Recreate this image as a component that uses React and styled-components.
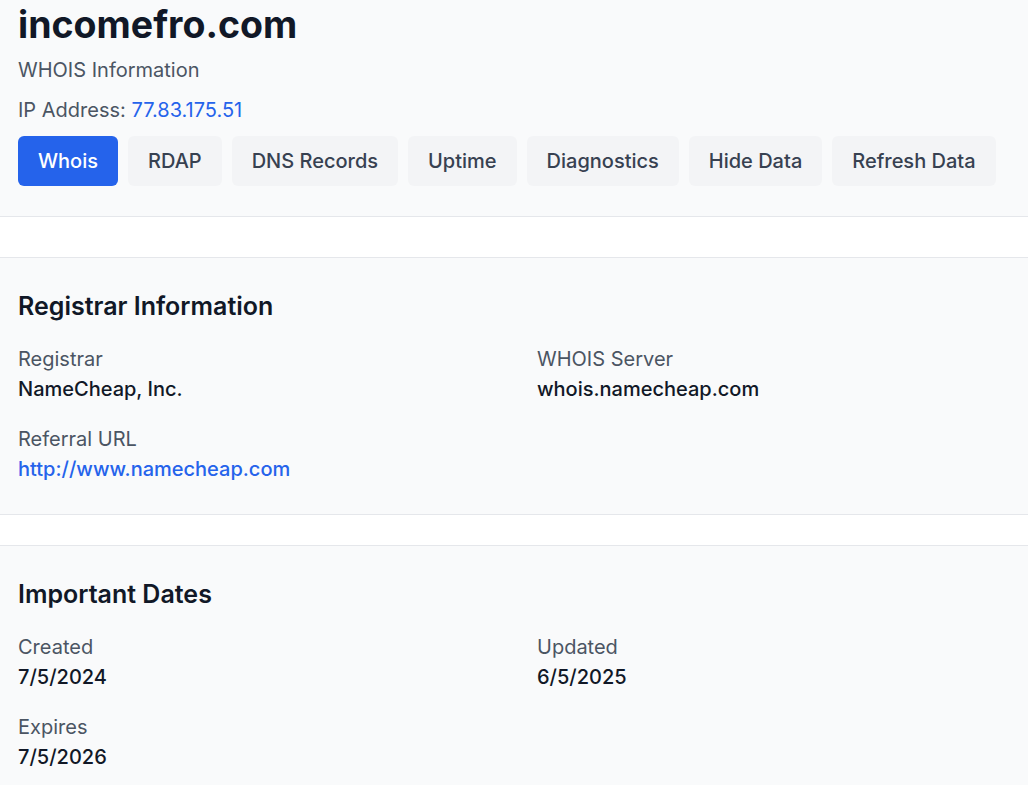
import styled, { createGlobalStyle } from "styled-components";

const GlobalStyle = createGlobalStyle`
  html, body {
    margin: 0;
    padding: 0;
    background: #ffffff;
    font-family: Inter, "Noto Sans", sans-serif;
    color: #111827;
  }
  * { box-sizing: border-box; }
`;

const tabs = ["Whois", "RDAP", "DNS Records", "Uptime", "Diagnostics", "Hide Data", "Refresh Data"];

export default function App() {
  return (
    <>
      <GlobalStyle />
      <Page>
        <Header>
          <Domain>incomefro.com</Domain>
          <Subtitle>WHOIS Information</Subtitle>
          <Subtitle>
            IP Address: <Link href="#">77.83.175.51</Link>
          </Subtitle>
          <TabBar>
            {tabs.map((t, i) => (
              <Tab key={t} $active={i === 0}>{t}</Tab>
            ))}
          </TabBar>
        </Header>

        <Section $gap={40}>
          <SectionTitle>Registrar Information</SectionTitle>
          <Grid>
            <Field>
              <Label>Registrar</Label>
              <Value>NameCheap, Inc.</Value>
            </Field>
            <Field>
              <Label>WHOIS Server</Label>
              <Value>whois.namecheap.com</Value>
            </Field>
            <Field>
              <Label>Referral URL</Label>
              <Value>
                <Link href="#">http://www.namecheap.com</Link>
              </Value>
            </Field>
          </Grid>
        </Section>

        <Section $gap={30}>
          <SectionTitle>Important Dates</SectionTitle>
          <Grid>
            <Field>
              <Label>Created</Label>
              <Value>7/5/2024</Value>
            </Field>
            <Field>
              <Label>Updated</Label>
              <Value>6/5/2025</Value>
            </Field>
            <Field>
              <Label>Expires</Label>
              <Value>7/5/2026</Value>
            </Field>
          </Grid>
        </Section>
      </Page>
    </>
  );
}

const Page = styled.div`
  display: flex;
  flex-direction: column;
  width: 100%;
`;

const Header = styled.header`
  display: flex;
  flex-direction: column;
  gap: 10px;
  padding: 5px 18px 30px;
  background: #f9fafb;
  border-bottom: 1px solid #e5e7eb;
`;

const Domain = styled.h1`
  margin: 0;
  font-size: 37.5px;
  line-height: 40px;
  font-weight: 700;
  color: #111827;
`;

const Subtitle = styled.div`
  font-size: 20px;
  line-height: 30px;
  color: #4b5563;
`;

const Link = styled.a`
  color: #2563eb;
  text-decoration: none;
`;

const TabBar = styled.nav`
  display: flex;
  gap: 10px;
  flex-wrap: wrap;
  margin-top: 1px;
`;

const Tab = styled.button`
  height: 50px;
  padding: 0 20px;
  border: none;
  border-radius: 6px;
  font-family: inherit;
  font-size: 20px;
  font-weight: 500;
  background: ${(p) => (p.$active ? "#2563eb" : "#f3f4f6")};
  color: ${(p) => (p.$active ? "#ffffff" : "#374151")};
  cursor: pointer;
`;

const Section = styled.section`
  margin-top: ${(p) => p.$gap}px;
  padding: 30px 18px;
  background: #f9fafb;
  border-top: 1px solid #e5e7eb;
  border-bottom: 1px solid #e5e7eb;
`;

const SectionTitle = styled.h2`
  margin: 0 0 20px;
  font-size: 25px;
  line-height: 36px;
  font-weight: 600;
  color: #111827;
`;

const Grid = styled.div`
  display: grid;
  grid-template-columns: 1fr 1fr;
  column-gap: 46px;
  row-gap: 20px;
`;

const Field = styled.div`
  display: flex;
  flex-direction: column;
`;

const Label = styled.div`
  font-size: 20px;
  line-height: 30px;
  color: #4b5563;
`;

const Value = styled.div`
  font-size: 20px;
  line-height: 30px;
  font-weight: 500;
  color: #111827;
`;
